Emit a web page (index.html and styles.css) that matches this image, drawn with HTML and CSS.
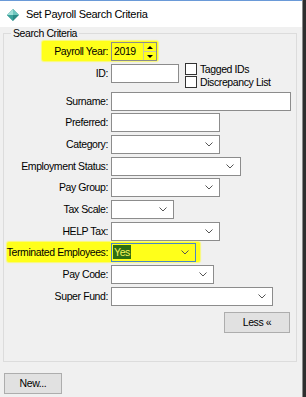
FILE: index.html
```html
<!DOCTYPE html>
<html>
<head>
  <meta charset="utf-8">
  <title>Set Payroll Search Criteria</title>
  <link rel="stylesheet" href="styles.css">
</head>
<body>
  <div class="window">
    <div class="main">
      <div class="titlebar">
        <svg class="app-icon" width="12" height="12" viewBox="0 0 12 12">
          <polygon points="6,0 12,6 6,12 0,6" fill="#2a8a85"/>
          <polygon points="6,0 12,6 6,6" fill="#6cc6be"/>
          <polygon points="6,0 6,6 0,6" fill="#9fe0d8"/>
          <polygon points="0,6 6,6 6,12" fill="#3aa29b"/>
        </svg>
        <span class="title">Set Payroll Search Criteria</span>
      </div>

      <div class="content">
        <fieldset class="criteria">
          <legend>Search Criteria</legend>

          <div class="rows">
            <div class="row marked marked-year">
              <span class="label">Payroll Year:</span>
              <div class="spinner">
                <span class="spin-value">2019</span>
                <div class="spin-buttons">
                  <span class="spin-up"></span>
                  <span class="spin-down"></span>
                </div>
              </div>
            </div>

            <div class="row row-id">
              <span class="label">ID:</span>
              <input type="text" class="text w-id">
              <div class="checks">
                <div class="check"><span class="box"></span>Tagged IDs</div>
                <div class="check"><span class="box"></span>Discrepancy List</div>
              </div>
            </div>

            <div class="row">
              <span class="label">Surname:</span>
              <input type="text" class="text w-surname">
            </div>

            <div class="row">
              <span class="label">Preferred:</span>
              <input type="text" class="text w-mid">
            </div>

            <div class="row">
              <span class="label">Category:</span>
              <div class="combo w-mid"><span class="combo-value"></span><svg class="chevron" width="8" height="5" viewBox="0 0 8 5"><polyline points="0.5,0.5 4,4 7.5,0.5"/></svg></div>
            </div>

            <div class="row">
              <span class="label">Employment Status:</span>
              <div class="combo w-status"><span class="combo-value"></span><svg class="chevron" width="8" height="5" viewBox="0 0 8 5"><polyline points="0.5,0.5 4,4 7.5,0.5"/></svg></div>
            </div>

            <div class="row">
              <span class="label">Pay Group:</span>
              <div class="combo w-mid"><span class="combo-value"></span><svg class="chevron" width="8" height="5" viewBox="0 0 8 5"><polyline points="0.5,0.5 4,4 7.5,0.5"/></svg></div>
            </div>

            <div class="row">
              <span class="label">Tax Scale:</span>
              <div class="combo w-tax"><span class="combo-value"></span><svg class="chevron" width="8" height="5" viewBox="0 0 8 5"><polyline points="0.5,0.5 4,4 7.5,0.5"/></svg></div>
            </div>

            <div class="row">
              <span class="label">HELP Tax:</span>
              <div class="combo w-mid"><span class="combo-value"></span><svg class="chevron" width="8" height="5" viewBox="0 0 8 5"><polyline points="0.5,0.5 4,4 7.5,0.5"/></svg></div>
            </div>

            <div class="row marked marked-terminated">
              <span class="label">Terminated Employees:</span>
              <div class="combo combo-focus w-terminated"><span class="combo-value"><span class="selected">Yes</span></span><svg class="chevron" width="8" height="5" viewBox="0 0 8 5"><polyline points="0.5,0.5 4,4 7.5,0.5"/></svg></div>
            </div>

            <div class="row">
              <span class="label">Pay Code:</span>
              <div class="combo w-paycode"><span class="combo-value"></span><svg class="chevron" width="8" height="5" viewBox="0 0 8 5"><polyline points="0.5,0.5 4,4 7.5,0.5"/></svg></div>
            </div>

            <div class="row">
              <span class="label">Super Fund:</span>
              <div class="combo w-super"><span class="combo-value"></span><svg class="chevron" width="8" height="5" viewBox="0 0 8 5"><polyline points="0.5,0.5 4,4 7.5,0.5"/></svg></div>
            </div>
          </div>

          <div class="less-row">
            <button class="btn less-btn">Less &laquo;</button>
          </div>
        </fieldset>

        <div class="footer">
          <button class="btn new-btn">New...</button>
        </div>
      </div>
    </div>
    <div class="edge"></div>
  </div>
</body>
</html>
```

FILE: styles.css
```css
body {
  margin: 0;
  font-family: 'Liberation Sans', Arial, sans-serif;
  font-size: 10.5px;
  letter-spacing: -0.4px;
  color: #000;
  background: #f0f0f0;
}

.window {
  display: flex;
  height: 397px;
  width: 306px;
  overflow: hidden;
}

.main {
  width: 302px;
  background: #f0f0f0;
  display: flex;
  flex-direction: column;
}

.edge {
  width: 4px;
  background: #2e2e2e;
  border-left: 1px solid #8a8a8a;
  box-sizing: border-box;
}

.titlebar {
  height: 27px;
  box-sizing: border-box;
  border-top: 1px solid #6a9ad8;
  background: #fff;
  display: flex;
  align-items: center;
  padding-left: 7px;
  gap: 7px;
}

.app-icon {
  flex-shrink: 0;
  margin-top: 1px;
}

.title {
  font-size: 11px;
  letter-spacing: -0.3px;
  color: #000;
}

.criteria {
  margin: 0 0 0 3px;
  width: 294px;
  min-width: 0;
  box-sizing: border-box;
  padding: 2px 0 28px 0;
  border: 1px solid #dcdcdc;
}

.criteria legend {
  margin-left: 7px;
  padding: 0 2px;
  line-height: 13px;
  font-size: 10.5px;
}

.rows {
  display: flex;
  flex-direction: column;
  gap: 2.67px;
}

.row {
  display: flex;
  align-items: flex-start;
  height: 19px;
  position: relative;
  z-index: 0;
}

.label {
  width: 104px;
  flex-shrink: 0;
  margin-right: 3px;
  text-align: right;
  line-height: 19px;
  white-space: nowrap;
}

.row-id {
  height: 25.33px;
}

/* yellow marker over the screenshot */
.marked::before {
  content: "";
  position: absolute;
  z-index: -1;
  background: #ffff1a;
  border-radius: 2px;
  box-shadow: 0 0 1px 1px rgba(255, 255, 40, 0.6);
}

.marked-year::before {
  left: 38px;
  top: -1px;
  width: 116px;
  height: 20px;
}

.marked-terminated::before {
  left: 3px;
  top: -1px;
  width: 193px;
  height: 20px;
}

.text,
.combo,
.spinner {
  height: 19px;
  box-sizing: border-box;
  border: 1px solid #8c8c8c;
  background: #fff;
  margin: 0;
  padding: 0 2px;
  font: inherit;
}

.w-id { width: 68px; }
.w-surname { width: 180px; }
.w-mid { width: 109px; }
.w-status { width: 130px; }
.w-tax { width: 63px; }
.w-terminated { width: 85px; }
.w-paycode { width: 103px; }
.w-super { width: 162px; }

.combo {
  display: flex;
  align-items: center;
}

.combo-value {
  flex: 1;
  line-height: 15px;
}

.chevron {
  flex-shrink: 0;
  margin-right: 4px;
  fill: none;
  stroke: #555;
  stroke-width: 1;
}

.marked .combo,
.marked .spinner {
  background: transparent;
}

.combo-focus {
  border-color: #4a86c8;
  padding-left: 1px;
}

.selected {
  background: #2f6e12;
  color: #f4f45a;
  padding: 1px 1px;
}

.spinner {
  width: 46px;
  display: flex;
  padding: 0 0 0 2px;
}

.spin-value {
  flex: 1;
  line-height: 17px;
}

.spin-buttons {
  width: 12px;
  display: flex;
  flex-direction: column;
  border-left: 1px solid #c8c8a0;
}

.spin-up,
.spin-down {
  flex: 1;
  display: flex;
  align-items: center;
  justify-content: center;
}

.spin-up {
  border-bottom: 1px solid #c8c8a0;
}

.spin-up::after,
.spin-down::after {
  content: "";
  border-left: 3px solid transparent;
  border-right: 3px solid transparent;
}

.spin-up::after {
  border-bottom: 3px solid #000;
}

.spin-down::after {
  border-top: 3px solid #000;
}

.checks {
  display: flex;
  flex-direction: column;
  margin: -1px 0 0 6px;
}

.check {
  display: flex;
  align-items: center;
  gap: 3px;
  height: 13px;
  white-space: nowrap;
}

.box {
  width: 12px;
  height: 12px;
  box-sizing: border-box;
  border: 1px solid #333;
  background: #fff;
}

.less-row {
  display: flex;
  justify-content: flex-end;
  margin-top: 6px;
  padding-right: 6px;
}

.btn {
  height: 21px;
  box-sizing: border-box;
  border: 1px solid #adadad;
  background: #e1e1e1;
  font: inherit;
  letter-spacing: -0.4px;
  color: #000;
  padding: 0;
}

.less-btn {
  width: 66px;
}

.footer {
  padding: 11px 0 0 4px;
}

.new-btn {
  width: 58px;
}
```
